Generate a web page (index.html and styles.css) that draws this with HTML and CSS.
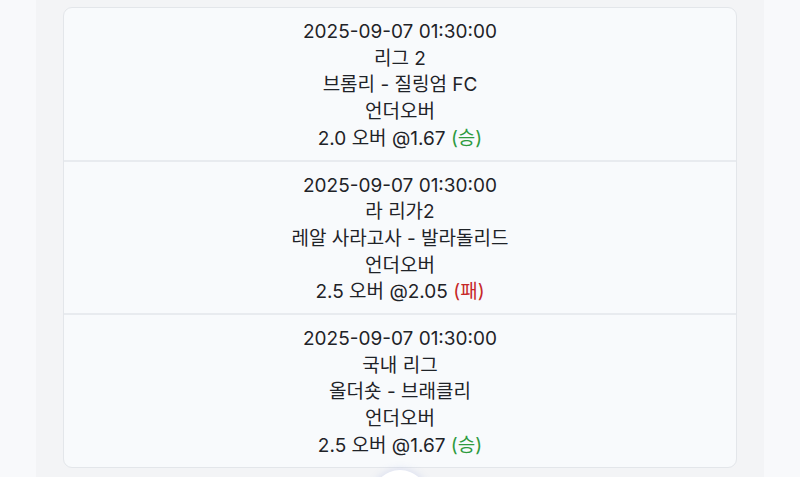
FILE: index.html
```html
<!DOCTYPE html>
<html lang="ko">
<head>
<meta charset="utf-8">
<link rel="stylesheet" href="styles.css">
</head>
<body>
<div class="page">
  <div class="column">
    <div class="card">
      <div class="row">
        <div>2025-09-07 01:30:00</div>
        <div>리그 2</div>
        <div>브롬리 - 질링엄 FC</div>
        <div>언더오버</div>
        <div>2.0 오버 @1.67 <span class="win">(승)</span></div>
      </div>
      <div class="row">
        <div>2025-09-07 01:30:00</div>
        <div>라 리가2</div>
        <div>레알 사라고사 - 발라돌리드</div>
        <div>언더오버</div>
        <div>2.5 오버 @2.05 <span class="lose">(패)</span></div>
      </div>
      <div class="row">
        <div>2025-09-07 01:30:00</div>
        <div>국내 리그</div>
        <div>올더숏 - 브래클리</div>
        <div>언더오버</div>
        <div>2.5 오버 @1.67 <span class="win">(승)</span></div>
      </div>
    </div>
    <div class="fab"></div>
  </div>
</div>
</body>
</html>
```
FILE: styles.css
```css
html, body {
  margin: 0;
  padding: 0;
  background: #f8f9fb;
  height: 100%;
  overflow: hidden;
}
.page {
  display: flex;
  justify-content: center;
  height: 477px;
  overflow: hidden;
}
.column {
  position: relative;
  width: 728px;
  background: #f3f4f6;
  padding: 7px 27px 0;
  box-sizing: border-box;
  overflow: hidden;
}
.card {
  background: #f8fafc;
  border: 1.5px solid #e3e6ea;
  border-radius: 9px;
  font-family: Inter, "Noto Sans CJK KR", sans-serif;
  font-size: 19px;
  line-height: 26.7px;
  color: #1f2328;
  text-align: center;
}
.row {
  padding: 11px 0 7px;
}
.row + .row {
  border-top: 2px solid #e8ebef;
}
.win { color: #2e9b3f; }
.lose { color: #c62828; }
.fab {
  position: absolute;
  left: 336px;
  top: 470px;
  width: 56px;
  height: 56px;
  border-radius: 50%;
  background: #fff;
  box-shadow: 0 0 8px rgba(120, 140, 220, 0.25);
}
```
